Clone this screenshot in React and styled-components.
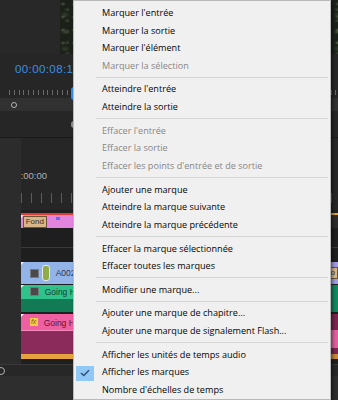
import React from 'react'
import styled, { createGlobalStyle } from 'styled-components'

const GlobalStyle = createGlobalStyle`
  html, body {
    margin: 0;
    padding: 0;
    background: #232323;
  }
  #root {
    width: 338px;
    height: 400px;
  }
`

const menuItems = [
  { label: "Marquer l'entrée" },
  { label: 'Marquer la sortie' },
  { label: "Marquer l'élément" },
  { label: 'Marquer la sélection', disabled: true },
  { sep: true },
  { label: "Atteindre l'entrée" },
  { label: 'Atteindre la sortie' },
  { sep: true },
  { label: "Effacer l'entrée", disabled: true },
  { label: 'Effacer la sortie', disabled: true },
  { label: "Effacer les points d'entrée et de sortie", disabled: true },
  { sep: true },
  { label: 'Ajouter une marque' },
  { label: 'Atteindre la marque suivante' },
  { label: 'Atteindre la marque précédente' },
  { sep: true },
  { label: 'Effacer la marque sélectionnée' },
  { label: 'Effacer toutes les marques' },
  { sep: true },
  { label: 'Modifier une marque...' },
  { sep: true },
  { label: 'Ajouter une marque de chapitre...' },
  { label: 'Ajouter une marque de signalement Flash...' },
  { sep: true },
  { label: 'Afficher les unités de temps audio' },
  { label: 'Afficher les marques', checked: true },
  { label: "Nombre d'échelles de temps" },
]

function App() {
  return (
    <>
      <GlobalStyle />
      <Screen>
        <Monitor>
          <FrameRow>
            <FrameGap />
            <VideoFrame />
          </FrameRow>
          <TimecodeRow>
            <Timecode>00:00:08:18</Timecode>
          </TimecodeRow>
          <Ruler>
            <Playhead />
          </Ruler>
          <ScrubBar>
            <InPoint />
          </ScrubBar>
          <ControlsRow>
            <ControlKnob />
          </ControlsRow>
        </Monitor>

        <Timeline>
          <TrackHeaders />
          <Tracks>
            <TimeRuler>
              <RulerTime>:00:00</RulerTime>
              <RulerTicks />
            </TimeRuler>
            <Gap h={3} />
            <ClipRow h={15}>
              <Clip bg="#e384df" topLine="#e23a35" w={300} start>
                <NameTag>Fond</NameTag>
                <TinyIcon />
              </Clip>
              <Clip bg="#2a2a2a" topLine="#e0a22a" />
            </ClipRow>
            <EmptyTrack h={19} />
            <TrackLine />
            <EmptyTrack h={14} />
            <ClipRow h={22}>
              <Clip bg="#93b4e8" w={300} start>
                <ClipIcon />
                <Marker />
                <ClipName color="#2a3550">A002_C014</ClipName>
              </Clip>
              <Clip bg="#a39be6">
                <NameTag>Fo</NameTag>
              </Clip>
            </ClipRow>
            <Gap h={1} />
            <ClipRow h={27}>
              <SplitClip top="#2fc28c" bottom="#127a55" split={14} w={300} start>
                <ClipIcon />
                <ClipName color="#14402d">Going Home</ClipName>
              </SplitClip>
              <Clip bg="#11885e" />
            </ClipRow>
            <Gap h={2} />
            <ClipRow h={45}>
              <AudioClip w={300} start>
                <FxBadge>fx</FxBadge>
                <ClipName color="#5a1636">Going Home</ClipName>
              </AudioClip>
              <AudioClip alt />
            </ClipRow>
          </Tracks>
        </Timeline>

        <ScrollBar>
          <ScrollKnob />
        </ScrollBar>
        <BottomArea />

        <Menu>
          {menuItems.map((item, i) =>
            item.sep ? (
              <Separator key={i} />
            ) : (
              <MenuItem key={i} disabled={item.disabled}>
                {item.checked && (
                  <CheckBox>
                    <svg width="10" height="8" viewBox="0 0 10 8">
                      <polyline points="1,4 3.8,6.6 9,1.2" fill="none" stroke="#2c4f78" strokeWidth="1.4" />
                    </svg>
                  </CheckBox>
                )}
                {item.label}
              </MenuItem>
            )
          )}
        </Menu>
      </Screen>
    </>
  )
}

export default App

const Screen = styled.div`
  position: relative;
  width: 338px;
  height: 400px;
  overflow: hidden;
  display: flex;
  flex-direction: column;
  background: #262626;
  font-family: 'Liberation Sans', Arial, sans-serif;
`

const Monitor = styled.div`
  height: 138px;
  display: flex;
  flex-direction: column;
  background: #262626;
`

const FrameRow = styled.div`
  height: 54px;
  display: flex;
`

const FrameGap = styled.div`
  width: 60px;
  background: #282828;
`

const VideoFrame = styled.div`
  flex: 1;
  background-color: #1b2119;
  background-image:
    radial-gradient(ellipse 3px 2px at 3px 4px, rgba(130, 140, 112, 0.45), transparent),
    radial-gradient(ellipse 4px 3px at 8px 10px, rgba(85, 98, 70, 0.55), transparent),
    radial-gradient(ellipse 5px 4px at 5px 15px, rgba(55, 66, 46, 0.8), transparent);
  background-size: 11px 13px, 9px 11px, 13px 17px;
`

const TimecodeRow = styled.div`
  height: 32px;
  padding: 9px 0 0 15px;
  box-sizing: border-box;
`

const Timecode = styled.div`
  font-size: 11.5px;
  line-height: 12px;
  letter-spacing: 0.4px;
  color: #3b8fe6;
`

const Ruler = styled.div`
  position: relative;
  height: 12px;
  margin-left: 9px;
  background: repeating-linear-gradient(90deg, #6a6a6a 0 1px, transparent 1px 4.8px) 0 4px / 100% 5px no-repeat;
`

const Playhead = styled.div`
  position: absolute;
  left: 62px;
  top: 1px;
  width: 8px;
  height: 13px;
  border-radius: 3px 0 0 3px;
  background: #3a8de2;
`

const ScrubBar = styled.div`
  height: 13px;
  display: flex;
  align-items: center;
  padding-left: 11px;
  background: #313131;
`

const InPoint = styled.div`
  width: 4px;
  height: 4px;
  border-radius: 50%;
  border: 1.5px solid #b8b8b8;
  background: #2a2a2a;
`

const ControlsRow = styled.div`
  flex: 1;
  display: flex;
  align-items: center;
  padding-left: 71px;
  border-bottom: 1px solid #1a1a1a;
`

const ControlKnob = styled.div`
  width: 8px;
  height: 7px;
  border-radius: 3px;
  background: #8e8e8e;
`

const Timeline = styled.div`
  height: 226px;
  display: flex;
`

const TrackHeaders = styled.div`
  width: 24px;
  background: #2c2c2c;
`

const Tracks = styled.div`
  flex: 1;
  display: flex;
  flex-direction: column;
  background: #1f1f1f;
`

const TimeRuler = styled.div`
  height: 72px;
  display: flex;
  flex-direction: column;
  background: #262626;
`

const RulerTime = styled.div`
  margin-top: 32px;
  font-size: 9.5px;
  line-height: 11px;
  color: #b0b0b0;
`

const RulerTicks = styled.div`
  margin-top: 12px;
  height: 10px;
  background: repeating-linear-gradient(90deg, #5c5c5c 0 1px, transparent 1px 10px);
`

const Gap = styled.div`
  height: ${p => p.h}px;
`

const EmptyTrack = styled.div`
  height: ${p => p.h}px;
  background: #1e1e1e;
`

const TrackLine = styled.div`
  height: 1px;
  background: #3a3a3a;
`

const ClipRow = styled.div`
  height: ${p => p.h}px;
  display: flex;
`

const Clip = styled.div`
  position: relative;
  ${p => (p.w ? `width: ${p.w}px;` : 'flex: 1;')}
  display: flex;
  align-items: center;
  gap: 3px;
  padding-left: 2px;
  box-sizing: border-box;
  background: ${p => p.bg};
  border-top: ${p => (p.topLine ? `2px solid ${p.topLine}` : 'none')};
  overflow: hidden;
  &::before {
    content: '';
    display: ${p => (p.start ? 'block' : 'none')};
    position: absolute;
    left: 0;
    top: 0;
    border-top: 3px solid #f2f2f2;
    border-right: 3px solid transparent;
  }
`

const SplitClip = styled(Clip)`
  align-items: flex-start;
  padding-top: 2px;
  background: linear-gradient(${p => p.top} 0 ${p => p.split}px, ${p => p.bottom} ${p => p.split}px);
`

const AudioClip = styled(Clip)`
  align-items: flex-start;
  padding-top: 4px;
  background: ${p =>
    p.alt
      ? 'linear-gradient(#7b2550 0 16px, #e0609f 16px 34px, #7b2550 34px 40px, #c98a3a 40px)'
      : 'linear-gradient(#ee60a2 0 16px, #f38cbd 16px 17px, #8b2b5b 17px 40px, #e6a23e 40px)'};
`

const NameTag = styled.div`
  height: 10px;
  padding: 0 2px;
  border: 1px solid #6a5636;
  background: #d8b68a;
  font-size: 8px;
  line-height: 10px;
  color: #3a2f20;
`

const TinyIcon = styled.div`
  width: 4px;
  height: 3px;
  margin: -6px 0 0 6px;
  background: #6b6be8;
`

const ClipIcon = styled.div`
  width: 7px;
  height: 7px;
  margin-left: 7px;
  background: #4a4a4a;
  border: 1px solid #7a7a7a;
`

const Marker = styled.div`
  width: 6px;
  height: 14px;
  border-radius: 3px;
  border: 1px solid #e8e8e8;
  background: #8fac48;
`

const ClipName = styled.div`
  font-size: 8.5px;
  line-height: 10px;
  white-space: nowrap;
  color: ${p => p.color};
  margin-left: 3px;
`

const FxBadge = styled.div`
  width: 8px;
  height: 8px;
  margin-left: 7px;
  background: #efcf42;
  font-size: 7px;
  line-height: 8px;
  font-style: italic;
  text-align: center;
  color: #a2521f;
`

const ScrollBar = styled.div`
  height: 12px;
  display: flex;
  align-items: center;
  background: #272727;
  border-top: 1px solid #3a3a3a;
  box-sizing: border-box;
`

const ScrollKnob = styled.div`
  width: 6px;
  height: 6px;
  margin-left: -3px;
  border-radius: 50%;
  border: 1.5px solid #b0b0b0;
`

const BottomArea = styled.div`
  flex: 1;
  background: #2e2e2e;
`

const Menu = styled.div`
  position: absolute;
  top: 0;
  left: 73px;
  width: 258px;
  box-sizing: border-box;
  padding-top: 3px;
  background: #f0f0f0;
  border: 1px solid #b9b9b9;
  box-shadow: 2px 2px 3px rgba(0, 0, 0, 0.45);
  font-family: 'Open Sans', 'Noto Sans', sans-serif;
  font-size: 9.1px;
`

const MenuItem = styled.div`
  position: relative;
  height: 17.6px;
  line-height: 17.6px;
  padding-left: 28px;
  white-space: nowrap;
  color: ${p => (p.disabled ? '#878787' : '#050505')};
`

const CheckBox = styled.div`
  position: absolute;
  left: 2px;
  top: 2.6px;
  width: 18px;
  height: 15px;
  display: flex;
  align-items: center;
  justify-content: center;
  background: #91c8f5;
`

const Separator = styled.div`
  height: 1px;
  margin: 2.55px 2px 2.55px 22px;
  background: #d5d5d5;
`
